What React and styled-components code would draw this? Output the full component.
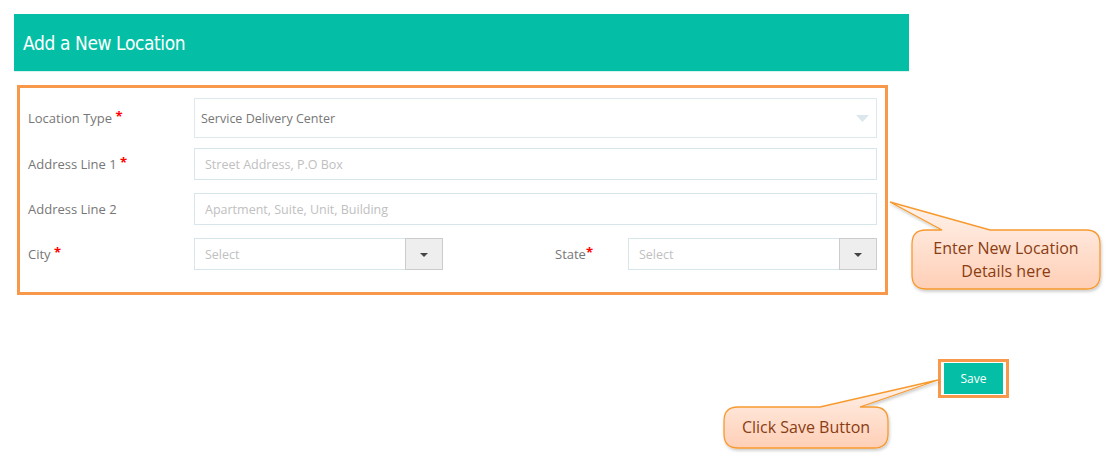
import React from 'react'
import styled, { createGlobalStyle } from 'styled-components'

const GlobalStyle = createGlobalStyle`
    body {
        margin: 0;
        background: #fff;
        font-family: "Open Sans", Lato, sans-serif;
    }
`

function calloutPath(w, h, r, tip, b1, b2) {
    return `M ${tip[0]} ${tip[1]} L ${b2} 0 H ${w - r} Q ${w} 0 ${w} ${r} V ${h - r} Q ${w} ${h} ${w - r} ${h} H ${r} Q 0 ${h} 0 ${h - r} V ${r} Q 0 0 ${r} 0 H ${b1} Z`
}

function Callout({ x, y, w, h, tip, b1, b2, id, children }) {
    return (
        <CalloutBox x={x} y={y} w={w} h={h}>
            <CalloutSvg width={w} height={h}>
                <defs>
                    <linearGradient id={id} x1="0" y1="0" x2="0" y2="1">
                        <stop offset="0" stopColor="#fff3ec" />
                        <stop offset="1" stopColor="#ffcfb6" />
                    </linearGradient>
                    <filter id={id + 's'} x="-20%" y="-20%" width="140%" height="150%">
                        <feDropShadow dx="1" dy="2" stdDeviation="1.5" floodColor="#000" floodOpacity="0.2" />
                    </filter>
                </defs>
                <path
                    d={calloutPath(w, h, 14, tip, b1, b2)}
                    fill={`url(#${id})`}
                    stroke="#f79a2e"
                    strokeWidth="1.3"
                    filter={`url(#${id}s)`}
                />
            </CalloutSvg>
            <CalloutText>{children}</CalloutText>
        </CalloutBox>
    )
}

function Arrow({ light }) {
    return light ? (
        <svg width="13" height="7" viewBox="0 0 13 7"><path d="M0 0 H13 L6.5 7 Z" fill="#dbe7ec" /></svg>
    ) : (
        <svg width="8" height="4" viewBox="0 0 8 4"><path d="M0 0 H8 L4 4 Z" fill="#444" /></svg>
    )
}

function App() {
    return (
        <Page>
            <GlobalStyle />
            <Header>
                <Title>Add a New Location</Title>
            </Header>

            <FormBox>
                <Row>
                    <Label>Location Type <Req>*</Req></Label>
                    <TypeSelect>
                        <Value>Service Delivery Center</Value>
                        <Arrow light />
                    </TypeSelect>
                </Row>
                <Row>
                    <Label>Address Line 1 <Req>*</Req></Label>
                    <Field placeholder="Street Address, P.O Box" />
                </Row>
                <Row>
                    <Label>Address Line 2</Label>
                    <Field placeholder="Apartment, Suite, Unit, Building" />
                </Row>
                <Row>
                    <Label>City <Req>*</Req></Label>
                    <Pair>
                        <Combo>
                            <ComboText>Select</ComboText>
                            <ComboButton><Arrow /></ComboButton>
                        </Combo>
                        <StateGroup>
                            <StateLabel>State<Req>*</Req></StateLabel>
                            <Combo>
                                <ComboText>Select</ComboText>
                                <ComboButton><Arrow /></ComboButton>
                            </Combo>
                        </StateGroup>
                    </Pair>
                </Row>
            </FormBox>

            <Footer>
                <SaveFrame>
                    <SaveButton>Save</SaveButton>
                </SaveFrame>
            </Footer>

            <Callout id="c1" x={912} y={230} w={188} h={59} tip={[-22, -28]} b1={30} b2={78}>
                Enter New Location<br />Details here
            </Callout>
            <Callout id="c2" x={724} y={407} w={164} h={41} tip={[214, -27]} b1={96} b2={136}>
                Click Save Button
            </Callout>
        </Page>
    )
}

export default App

const Page = styled.div`
    position: relative;
    width: 1116px;
    height: 476px;
    padding: 14px;
    box-sizing: border-box;
`

const Header = styled.div`
    width: 895px;
    height: 58px;
    background: #04bfa5;
    border-bottom: 1px solid #d8f3ee;
    display: flex;
    align-items: center;
    padding-left: 9px;
    box-sizing: border-box;
`

const Title = styled.h1`
    margin: 0;
    font-family: "DejaVu Sans", sans-serif;
    font-stretch: condensed;
    font-weight: 400;
    font-size: 19px;
    letter-spacing: -0.4px;
    color: #fff;
`

const FormBox = styled.div`
    margin: 13px 0 0 3px;
    width: 871px;
    border: 3px solid #f7984a;
    padding: 10px 8px 22px 8px;
    box-sizing: border-box;
    display: flex;
    flex-direction: column;
    gap: 10px;
    & > *:nth-child(n + 3) {
        margin-top: 3px;
    }
`

const Row = styled.div`
    display: grid;
    grid-template-columns: 166px 1fr;
    align-items: center;
`

const Label = styled.label`
    font-size: 13px;
    color: #777;
`

const Req = styled.span`
    color: #f00;
    font-weight: 700;
    font-size: 13px;
    position: relative;
    top: -2px;
`

const TypeSelect = styled.div`
    height: 40px;
    border: 1px solid #dde9ed;
    box-sizing: border-box;
    display: flex;
    align-items: center;
    justify-content: space-between;
    padding: 0 7px 0 6px;
`

const Value = styled.span`
    font-size: 12.5px;
    color: #777;
`

const Field = styled.input`
    height: 32px;
    border: 1px solid #d6e6ea;
    box-sizing: border-box;
    padding: 0 0 0 10px;
    font-family: inherit;
    font-size: 12.5px;
    color: #777;
    outline: none;
    &::placeholder {
        color: #c0c0c0;
    }
`

const Pair = styled.div`
    display: flex;
    justify-content: space-between;
    align-items: center;
`

const StateGroup = styled.div`
    display: flex;
    align-items: center;
`

const StateLabel = styled(Label)`
    width: 73px;
`

const Combo = styled.div`
    width: 249px;
    height: 32px;
    border: 1px solid #d6e6ea;
    box-sizing: border-box;
    display: flex;
`

const ComboText = styled.span`
    flex: 1;
    display: flex;
    align-items: center;
    padding-left: 10px;
    font-size: 12.5px;
    color: #c0c0c0;
`

const ComboButton = styled.span`
    width: 36px;
    margin: -1px -1px -1px 0;
    background: #eee;
    border: 1px solid #ccc;
    display: flex;
    align-items: center;
    justify-content: center;
    padding-top: 2px;
`

const Footer = styled.div`
    display: flex;
    padding: 64px 0 0 924px;
`

const SaveFrame = styled.div`
    border: 3px solid #f7984a;
    padding: 1px 3px;
`

const SaveButton = styled.button`
    width: 59px;
    height: 31px;
    border: none;
    background: #04bfa5;
    color: #fff;
    font-family: "Open Sans", sans-serif;
    font-size: 12px;
    font-weight: 500;
    cursor: pointer;
`

const CalloutBox = styled.div`
    position: absolute;
    left: ${(p) => p.x}px;
    top: ${(p) => p.y}px;
    width: ${(p) => p.w}px;
    height: ${(p) => p.h}px;
    display: flex;
    align-items: center;
    justify-content: center;
`

const CalloutSvg = styled.svg`
    position: absolute;
    left: 0;
    top: 0;
    overflow: visible;
`

const CalloutText = styled.div`
    position: relative;
    font-family: "Open Sans", sans-serif;
    font-size: 16px;
    line-height: 23px;
    color: #8a3c12;
    text-align: center;
`
